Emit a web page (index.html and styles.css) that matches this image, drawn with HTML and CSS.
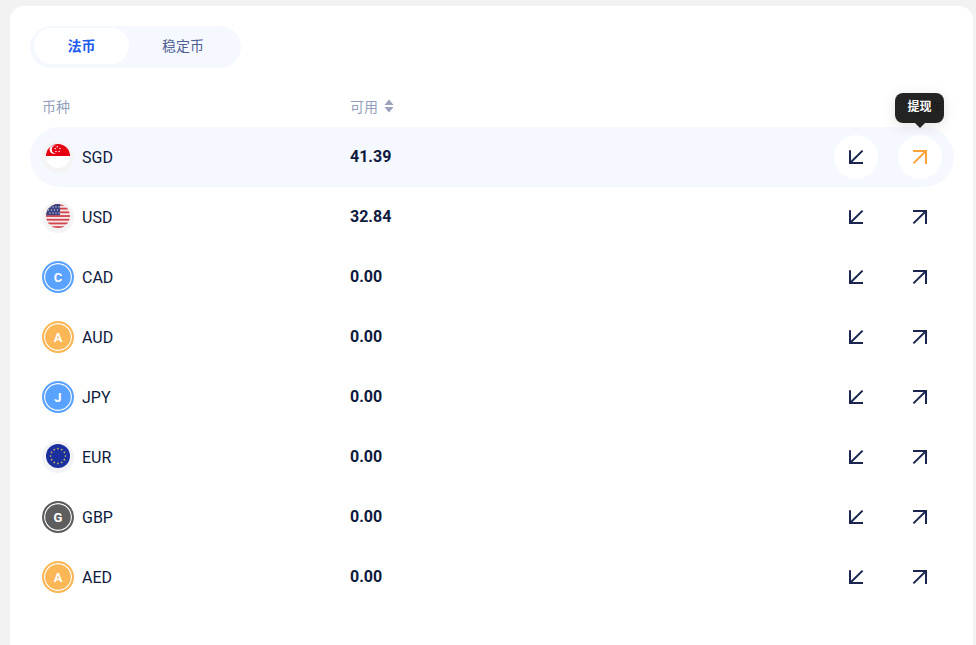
FILE: index.html
```html
<!DOCTYPE html>
<html lang="zh">
<head>
<meta charset="utf-8">
<title>资产</title>
<link rel="stylesheet" href="styles.css">
</head>
<body>
<svg class="defs" width="0" height="0" aria-hidden="true">
  <defs>
    <symbol id="in" viewBox="0 0 16 16"><path d="M14.6 1.6 2 14M2 1.2V14h13" fill="none" stroke="currentColor" stroke-width="2"/></symbol>
    <symbol id="out" viewBox="0 0 16 16"><path d="M1.4 14.4 14 2M1 2h13v13" fill="none" stroke="currentColor" stroke-width="2"/></symbol>
  </defs>
</svg>
<main class="card">
  <div class="tabs">
    <button class="tab tab-active">法币</button>
    <button class="tab tab-second">稳定币</button>
  </div>
  <div class="head">
    <span class="col-name">币种</span>
    <span class="col-amount">可用
      <svg class="sort" width="10" height="14" viewBox="0 0 10 14"><path d="M5 0.5 9.5 6H.5z" fill="#9aa3bb"/><path d="M5 13.5 .5 8h9z" fill="#9aa3bb"/></svg>
    </span>
    <span class="col-op">操作</span>
  </div>
  <div class="row row-hover">
    <div class="col-name">
      <svg class="flag" viewBox="0 0 32 32"><circle cx="16" cy="16" r="16" fill="#f4f4f4"/><clipPath id="c1"><circle cx="16" cy="15" r="12"/></clipPath><g clip-path="url(#c1)"><rect x="4" y="3" width="24" height="12" fill="#e60012"/><rect x="4" y="15" width="24" height="12" fill="#fff"/></g><circle cx="11.8" cy="8.6" r="4.2" fill="#fff"/><circle cx="13.6" cy="8.6" r="3.8" fill="#e60012"/><g fill="#fff"><circle cx="15.4" cy="5.8" r=".75"/><circle cx="18" cy="7.4" r=".75"/><circle cx="17.2" cy="10.4" r=".75"/><circle cx="14" cy="10.4" r=".75"/><circle cx="13.2" cy="7.4" r=".75"/></g></svg>
      <span>SGD</span>
    </div>
    <div class="col-amount amount">41.39</div>
    <div class="col-op ops">
      <button class="op op-white"><svg width="16" height="16"><use href="#in"/></svg></button>
      <button class="op op-white op-orange"><svg width="16" height="16"><use href="#out"/></svg><span class="tip">提现</span></button>
    </div>
  </div>
  <div class="row">
    <div class="col-name">
      <svg class="flag" viewBox="0 0 32 32"><circle cx="16" cy="16" r="16" fill="#f4f4f4"/><clipPath id="c2"><circle cx="16" cy="15" r="12"/></clipPath><g clip-path="url(#c2)"><rect x="4" y="3" width="24" height="24" fill="#f6e9e9"/><g fill="#d2464f"><rect x="4" y="3" width="24" height="1.85"/><rect x="4" y="6.7" width="24" height="1.85"/><rect x="4" y="10.4" width="24" height="1.85"/><rect x="4" y="14.1" width="24" height="1.85"/><rect x="4" y="17.8" width="24" height="1.85"/><rect x="4" y="21.5" width="24" height="1.85"/><rect x="4" y="25.2" width="24" height="1.85"/></g><rect x="4" y="3" width="14" height="11.2" fill="#3d4380"/><g fill="#cfd1e6"><circle cx="8" cy="6" r=".65"/><circle cx="11" cy="6" r=".65"/><circle cx="14" cy="6" r=".65"/><circle cx="17" cy="6" r=".65"/><circle cx="6.5" cy="9" r=".65"/><circle cx="9.5" cy="9" r=".65"/><circle cx="12.5" cy="9" r=".65"/><circle cx="15.5" cy="9" r=".65"/><circle cx="8" cy="12" r=".65"/><circle cx="11" cy="12" r=".65"/><circle cx="14" cy="12" r=".65"/><circle cx="17" cy="12" r=".65"/></g></g></svg>
      <span>USD</span>
    </div>
    <div class="col-amount amount">32.84</div>
    <div class="col-op ops">
      <button class="op"><svg width="16" height="16"><use href="#in"/></svg></button>
      <button class="op"><svg width="16" height="16"><use href="#out"/></svg></button>
    </div>
  </div>
  <div class="row">
    <div class="col-name"><span class="coin coin-blue">C</span><span>CAD</span></div>
    <div class="col-amount amount">0.00</div>
    <div class="col-op ops">
      <button class="op"><svg width="16" height="16"><use href="#in"/></svg></button>
      <button class="op"><svg width="16" height="16"><use href="#out"/></svg></button>
    </div>
  </div>
  <div class="row">
    <div class="col-name"><span class="coin coin-orange">A</span><span>AUD</span></div>
    <div class="col-amount amount">0.00</div>
    <div class="col-op ops">
      <button class="op"><svg width="16" height="16"><use href="#in"/></svg></button>
      <button class="op"><svg width="16" height="16"><use href="#out"/></svg></button>
    </div>
  </div>
  <div class="row">
    <div class="col-name"><span class="coin coin-blue">J</span><span>JPY</span></div>
    <div class="col-amount amount">0.00</div>
    <div class="col-op ops">
      <button class="op"><svg width="16" height="16"><use href="#in"/></svg></button>
      <button class="op"><svg width="16" height="16"><use href="#out"/></svg></button>
    </div>
  </div>
  <div class="row">
    <div class="col-name">
      <svg class="flag" viewBox="0 0 32 32"><circle cx="16" cy="16" r="16" fill="#f2f3f7"/><circle cx="16" cy="15" r="12" fill="#1c2f9f"/><g fill="#c8b85a"><circle cx="16" cy="7.6" r=".85"/><circle cx="19.7" cy="8.6" r=".85"/><circle cx="22.4" cy="11.3" r=".85"/><circle cx="23.4" cy="15" r=".85"/><circle cx="22.4" cy="18.7" r=".85"/><circle cx="19.7" cy="21.4" r=".85"/><circle cx="16" cy="22.4" r=".85"/><circle cx="12.3" cy="21.4" r=".85"/><circle cx="9.6" cy="18.7" r=".85"/><circle cx="8.6" cy="15" r=".85"/><circle cx="9.6" cy="11.3" r=".85"/><circle cx="12.3" cy="8.6" r=".85"/></g></svg>
      <span>EUR</span>
    </div>
    <div class="col-amount amount">0.00</div>
    <div class="col-op ops">
      <button class="op"><svg width="16" height="16"><use href="#in"/></svg></button>
      <button class="op"><svg width="16" height="16"><use href="#out"/></svg></button>
    </div>
  </div>
  <div class="row">
    <div class="col-name"><span class="coin coin-grey">G</span><span>GBP</span></div>
    <div class="col-amount amount">0.00</div>
    <div class="col-op ops">
      <button class="op"><svg width="16" height="16"><use href="#in"/></svg></button>
      <button class="op"><svg width="16" height="16"><use href="#out"/></svg></button>
    </div>
  </div>
  <div class="row">
    <div class="col-name"><span class="coin coin-orange">A</span><span>AED</span></div>
    <div class="col-amount amount">0.00</div>
    <div class="col-op ops">
      <button class="op"><svg width="16" height="16"><use href="#in"/></svg></button>
      <button class="op"><svg width="16" height="16"><use href="#out"/></svg></button>
    </div>
  </div>
</main>
</body>
</html>
```
FILE: styles.css
```css
* { box-sizing: border-box; }
html, body { height: 100%; }
body {
  margin: 0;
  padding: 6px 3px 0 10px;
  background: #f2f2f2;
  overflow: hidden;
  font-family: Roboto, "Noto Sans CJK SC", sans-serif;
  color: #0e1a3e;
}
.defs { position: absolute; }
.card {
  height: 100%;
  background: #fff;
  border-radius: 14px 14px 0 0;
  padding: 20px 19px 0 20px;
}
.tabs {
  display: flex;
  width: 211px;
  height: 42px;
  padding: 2px 4px 4px;
  background: #f5f8fe;
  border-radius: 21px;
}
.tab {
  border: 0;
  background: none;
  padding: 0 0 2px;
  font: inherit;
  font-size: 14px;
  height: 36px;
  cursor: pointer;
}
.tab-active {
  width: 95px;
  background: #fff;
  border-radius: 18px;
  color: #1f5cf0;
  font-weight: 700;
}
.tab-second { flex: 1; color: #4f5f92; }
.head {
  display: flex;
  align-items: center;
  height: 59px;
  padding: 17px 12px 0;
  font-size: 14px;
  color: #949fbc;
}
.row {
  display: flex;
  align-items: center;
  height: 60px;
  padding: 0 12px;
  border-radius: 30px;
  font-size: 16px;
}
.row-hover { background: #f5f8fe; }
.col-name { width: 308px; display: flex; align-items: center; gap: 8px; flex: none; }
.head .col-name { display: block; }
.col-amount { flex: 1; display: flex; align-items: center; gap: 6px; }
.col-op { flex: none; }
.head .col-op { color: #333; }
.amount { font-weight: 700; font-size: 16px; padding-bottom: 2px; }
.sort { display: block; }
.flag { width: 32px; height: 32px; display: block; flex: none; }
.coin {
  width: 32px;
  height: 32px;
  flex: none;
  display: flex;
  align-items: center;
  justify-content: center;
  border-radius: 50%;
  border: 2px solid;
  box-shadow: inset 0 0 0 1.2px #fff;
  color: #fff;
  font-size: 13px;
  font-weight: 700;
}
.coin-blue { background: #5aa2ff; border-color: #5aa2ff; }
.coin-orange { background: #fbb655; border-color: #fbb655; }
.coin-grey { background: #5e5e5e; border-color: #5e5e5e; }
.ops { display: flex; gap: 20px; padding-bottom: 0; }
.op {
  position: relative;
  width: 44px;
  height: 44px;
  padding: 0;
  border: 0;
  border-radius: 50%;
  background: none;
  color: #1a2550;
  display: flex;
  align-items: center;
  justify-content: center;
  font: inherit;
}
.op-white { background: #fff; }
.op-orange { color: #fba338; }
.tip {
  position: absolute;
  left: -3px;
  bottom: 56px;
  width: 49px;
  height: 30px;
  background: rgba(26, 26, 26, .96);
  border-radius: 8px;
  color: #fff;
  font-size: 12px;
  font-weight: 700;
  line-height: 29px;
  text-align: center;
  box-shadow: 0 3px 14px rgba(0, 0, 0, .12);
}
.tip::after {
  content: "";
  position: absolute;
  left: 50%;
  top: 100%;
  margin-left: -5px;
  border: 5px solid transparent;
  border-bottom: 0;
  border-top-color: rgba(26, 26, 26, .96);
}
```
